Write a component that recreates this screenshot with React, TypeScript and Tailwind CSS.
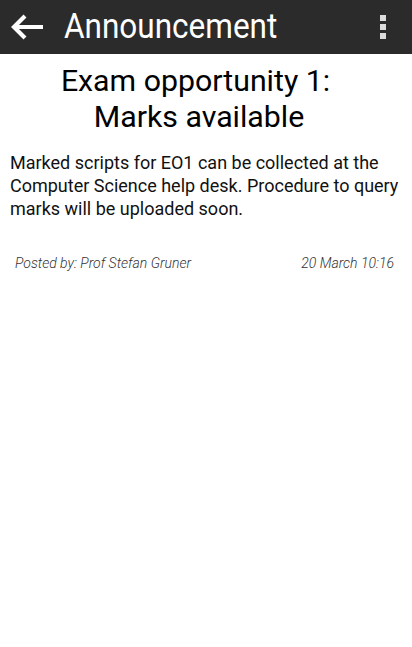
import React from "react";

export default function App() {
  return (
    <div className="w-[412px] h-[647px] bg-white font-['Roboto',sans-serif]">
      <div className="h-[54px] bg-[#2b2b2b] flex items-center">
        <svg width="44" height="54" viewBox="0 0 44 54" className="shrink-0">
          <path d="M14 27 H43 M25 16 L14 27 L25 38" stroke="#ffffff" strokeWidth="4.2" fill="none" strokeLinecap="butt" strokeLinejoin="miter" />
        </svg>
        <div className="ml-[20px] text-white text-[35px] leading-none origin-left scale-x-[0.9] whitespace-nowrap mt-[-1px]">Announcement</div>
        <div className="ml-auto mr-[26px] flex flex-col gap-[3px]">
          <div className="w-[6px] h-[6px] bg-[#dcdcdc]" />
          <div className="w-[6px] h-[6px] bg-[#dcdcdc]" />
          <div className="w-[6px] h-[6px] bg-[#dcdcdc]" />
        </div>
      </div>
      <div className="pt-[9px] pr-[14px] text-center text-[30.3px] leading-[36px] text-black">
        <div className="pr-[7px]">Exam opportunity 1:</div>
        <div>Marks available</div>
      </div>
      <div className="mt-[16px] px-[10px] text-[18px] leading-[23px] text-[#111]">
        Marked scripts for EO1 can be collected at the Computer Science help desk. Procedure to query marks will be uploaded soon.
      </div>
      <div className="mt-[33px] pl-[15px] pr-[18px] flex justify-between text-[14px] italic font-light text-[#333]">
        <span>Posted by: Prof Stefan Gruner</span>
        <span>20 March 10:16</span>
      </div>
    </div>
  );
}
